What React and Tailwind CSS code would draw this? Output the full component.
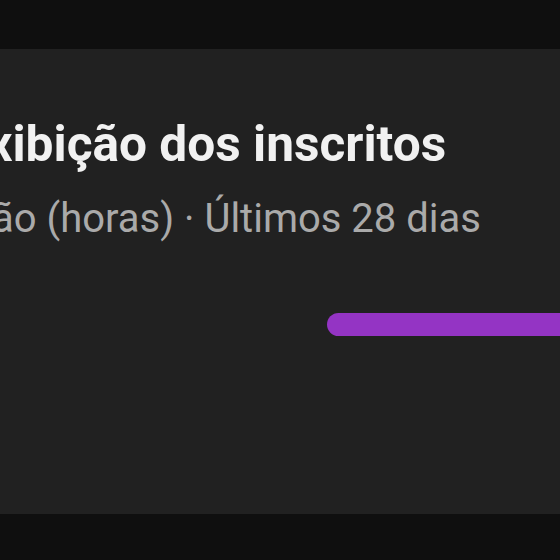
export default function App() {
  return (
    <div className="w-[560px] h-[560px] bg-[#0f0f0f] overflow-hidden flex flex-col" style={{ fontFamily: 'Roboto, "Liberation Sans", sans-serif' }}>
      <div className="h-[49px] shrink-0" />
      <div className="h-[465px] shrink-0 bg-[#212121] flex flex-col overflow-hidden">
        <div className="-ml-[273px] pt-[66px] whitespace-nowrap">
          <h2 className="text-[49.6px] leading-[58px] font-bold text-[#f1f1f1]">Tempo de exibição dos inscritos</h2>
          <p className="-ml-[26px] mt-[23px] text-[40px] leading-[46px] text-[#aaaaaa]">Tempo de exibição (horas) · Últimos 28 dias</p>
        </div>
        <div className="mt-[71px] flex justify-end">
          <div className="w-[233px] h-[23px] rounded-l-full bg-[#9434c4]" />
        </div>
      </div>
    </div>
  );
}
